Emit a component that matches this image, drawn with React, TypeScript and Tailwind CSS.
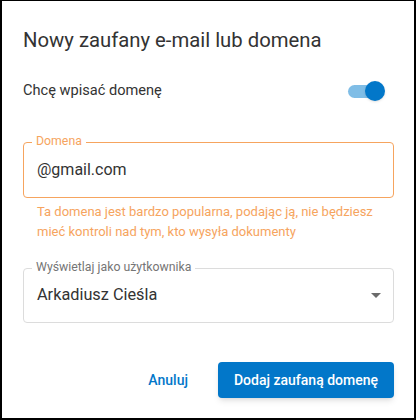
import React from "react";

const App = () => {
  return (
    <div
      className="w-[416px] h-[420px] bg-white border-2 border-t border-black flex flex-col"
      style={{ fontFamily: "Roboto, 'Liberation Sans', sans-serif" }}
    >
      <div className="pl-[21px] pr-[20px] pt-[26px] flex-1 flex flex-col">
        <h2 className="text-[20.3px] leading-[26px] text-[#333333]">
          Nowy zaufany e-mail lub domena
        </h2>

        {/* switch row */}
        <div className="mt-[24px] flex items-center justify-between h-[28px]">
          <span className="text-[14.6px] text-[#333333]">Chcę wpisać domenę</span>
          <div className="relative w-[37px] h-[20px] mr-[9px] flex items-center">
            <div className="w-[34px] h-[13px] rounded-full bg-[#7fbde6]" />
            <div className="absolute right-0 top-0 w-[20px] h-[20px] rounded-full bg-[#0277c9] shadow" />
          </div>
        </div>

        {/* domain input */}
        <div className="mt-[37px] relative">
          <div className="h-[56px] border border-[#f6a45e] rounded-[4px] px-[13px] flex items-center">
            <span className="text-[16px] text-[#333333]">@gmail.com</span>
          </div>
          <span className="absolute left-[9px] top-[-8px] px-[4px] bg-white text-[12.3px] leading-[14px] text-[#f6a45e]">
            Domena
          </span>
        </div>
        <p className="px-[14px] mt-[4px] text-[13px] leading-[20px] text-[#f6a45e]">
          Ta domena jest bardzo popularna, podając ją, nie będziesz mieć kontroli nad tym, kto wysyła dokumenty
        </p>

        {/* select */}
        <div className="mt-[26px] relative">
          <div className="h-[55px] border border-[#dcdcdc] rounded-[4px] pl-[13px] pr-[12px] flex items-center justify-between">
            <span className="text-[16.3px] text-[#333333]">Arkadiusz Cieśla</span>
            <svg width="10" height="5" viewBox="0 0 10 5">
              <path d="M0 0 L10 0 L5 5 Z" fill="#6b6b6b" />
            </svg>
          </div>
          <span className="absolute left-[9px] top-[-8px] px-[4px] bg-white text-[12.3px] leading-[14px] text-[#757575]">
            Wyświetlaj jako użytkownika
          </span>
        </div>

        {/* actions */}
        <div className="mt-auto mb-[20px] flex items-center justify-end gap-[30px]">
          <button className="text-[14px] font-medium text-[#0277c9]">Anuluj</button>
          <button className="h-[36px] px-[16px] rounded-[4px] bg-[#0277c9] text-white text-[14px] font-medium shadow-md">
            Dodaj zaufaną domenę
          </button>
        </div>
      </div>
    </div>
  );
};

export default App;
